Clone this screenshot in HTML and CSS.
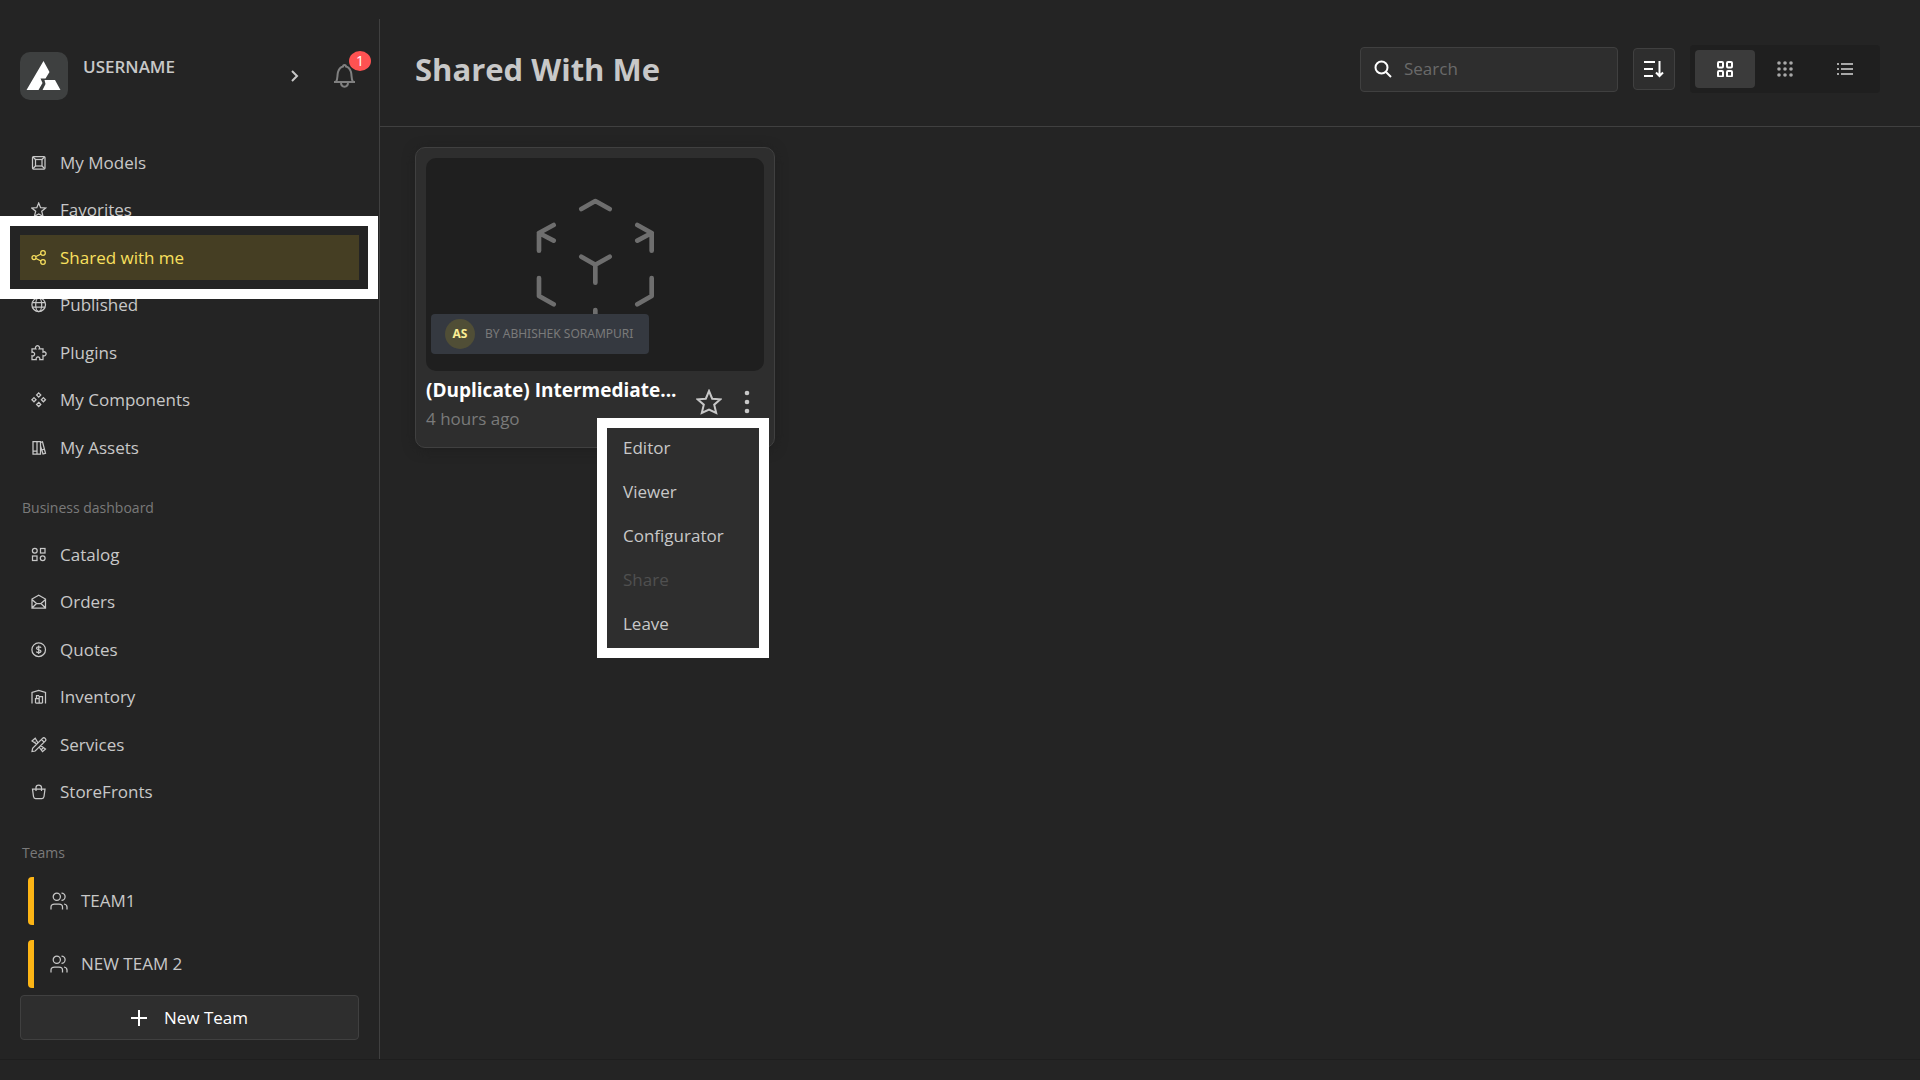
FILE: index.html
```html
<!DOCTYPE html>
<html lang="en">
<head>
<meta charset="utf-8">
<meta name="viewport" content="width=device-width, initial-scale=1">
<title>Shared With Me</title>
<link rel="stylesheet" href="styles.css">
</head>
<body>
<div class="app">
  <aside class="sidebar">
    <div class="profile">
      <svg class="avatar" viewBox="0 0 48 48" aria-hidden="true"><path fill="#fff" d="M23.500 9 29.500 20 25.500 26.500H20.500L22.500 31 18.500 38H6.500zM24.500 28H35L40.500 38H22.500L25.500 32z"/></svg>
      <span class="username">USERNAME</span>
      <button class="icon-btn chevron" aria-label="Account menu"><svg viewBox="0 0 10 14"><path d="M2 2l5 5-5 5"/></svg></button>
      <button class="icon-btn bell" aria-label="Notifications">
        <svg viewBox="0 0 24 26"><path d="M1 19h21M3 19c2-3 1-6 2-10 1-3 3-5 5-5.500a1.500 1.500 0 0 1 3 0c2 .5 4 2.500 5 5.500 1 4 0 7 2 10M8 19.500c0 5.500 7 5.500 7 0"/></svg>
        <span class="count">1</span>
      </button>
    </div>

    <nav>
      <ul class="nav-list models">
        <li><a href="#"><svg viewBox="0 0 16 16"><rect x="1.500" y="1.500" width="12.500" height="12.500" rx="1"/><rect x="4.500" y="4.500" width="6.500" height="6.500"/><path d="M2 2l2.500 2.500M13.500 2L11 4.500M2 13.500L4.500 11M13.500 13.500L11 11"/></svg>My Models</a></li>
        <li><a href="#"><svg viewBox="0 0 16 16"><path d="M7.700 1l1.900 4.700 5 .3-3.900 3.200 1.300 5-4.300-2.200-4.300 2.200 1.300-5L.8 6l5-.3z"/></svg>Favorites</a></li>
        <li class="active"><a href="#" aria-current="page"><svg viewBox="0 0 16 16"><circle cx="3" cy="7.500" r="2"/><circle cx="12" cy="3" r="2.300"/><circle cx="12" cy="12" r="2.300"/><path d="M5 6.500L10 4M5 8.500l5 2.500"/></svg>Shared with me</a></li>
        <li><a href="#"><svg viewBox="0 0 16 16"><circle cx="7.700" cy="7.700" r="6.800"/><ellipse cx="7.700" cy="7.700" rx="3" ry="6.800"/><path d="M1.500 5.500h12.500M1.500 10h12.500"/></svg>Published</a></li>
        <li><a href="#"><svg viewBox="0 0 16 16"><path d="M1 3.800h3.800a2 2 0 1 1 3.400 0H12v3.300a2 2 0 1 1 0 3.400V14.500H8.800a1.900 1.900 0 1 0-3.600 0H1v-3.700a1.900 1.900 0 1 0 0-3.500z"/></svg>Plugins</a></li>
        <li><a href="#"><svg viewBox="0 0 16 16"><path d="M7.700.9l2.100 2.100-2.100 2.100L5.600 3zM7.700 10.300l2.100 2.100-2.100 2.100-2.100-2.100zM3 5.600l2.100 2.100L3 9.800.9 7.700zM12.400 5.600l2.100 2.100-2.100 2.100-2.100-2.100z"/></svg>My Components</a></li>
        <li><a href="#"><svg viewBox="0 0 16 16"><path d="M2 1.500h4v12.500H2zM6 1.500h3.500v12.500H6zM9.500 2.500l2-.7 3 11.500-2.500.7-2.500-8M2 11h4M10.800 10l2.700-.8"/></svg>My Assets</a></li>
      </ul>
      <h2 class="section">Business dashboard</h2>
      <ul class="nav-list business">
        <li><a href="#"><svg viewBox="0 0 16 16"><circle cx="3.800" cy="3.800" r="2.400"/><rect x="9.500" y="1.500" width="4.500" height="4.500"/><rect x="1.500" y="9" width="4.500" height="4.500"/><circle cx="11.700" cy="11.300" r="2.400"/></svg>Catalog</a></li>
        <li><a href="#"><svg viewBox="0 0 16 16"><path d="M1 5l6.700-3.800L14.500 5v9H1zM1 5.500l4.500 4h4.500l4.500-4M1.500 13.500l4-4M14 13.500l-4-4"/></svg>Orders</a></li>
        <li><a href="#"><svg viewBox="0 0 16 16"><circle cx="7.700" cy="7.700" r="6.800"/><path d="M10 5.800C9.500 4.500 5.500 4.500 5.500 6.300c0 2 4.500.9 4.500 2.900 0 1.900-4.200 1.800-4.600.3M7.700 3.500v8.500"/></svg>Quotes</a></li>
        <li><a href="#"><svg viewBox="0 0 16 16"><path d="M1 14.500V3.500l6.700-2.200 6.800 2.200v11M4.500 14V9.500h3.700V14M8.200 14V7.500h3.300V14M4.500 14h7M5.500 9.500V6.500h2.700"/></svg>Inventory</a></li>
        <li><a href="#"><svg viewBox="0 0 16 16"><path d="M1 14.500l.6-3.200L11.500 1.400a1.900 1.900 0 0 1 2.700 2.700L4.200 14zM6.800 5.600L4.200 1.200 1 4l4.500 3M3 6l1.500-1.200M9.500 8.500L14.500 12l-3 2.700L8 10M10.500 12.500l2-2M10.500 2.500l2.600 2.600"/></svg>Services</a></li>
        <li><a href="#"><svg viewBox="0 0 16 16"><path d="M1.500 5h12.500L13 12.500q-.3 2-2 2H4.500q-1.700 0-2-2zM5 7V3.500q0-2.500 2.700-2.500t2.800 2.500V7"/></svg>StoreFronts</a></li>
      </ul>
      <h2 class="section">Teams</h2>
      <ul class="teams">
        <li><a href="#"><svg viewBox="0 0 18 18"><circle cx="6.800" cy="4.800" r="3.600"/><path d="M1 17.500v-2.500q0-3 3.500-3h4.500q3.500 0 3.500 3v2.500M11.500 1.200a3.600 3.600 0 0 1 0 7.200M14 12q3 .5 3 3v2.500"/></svg>TEAM1</a></li>
        <li><a href="#"><svg viewBox="0 0 18 18"><circle cx="6.800" cy="4.800" r="3.600"/><path d="M1 17.500v-2.500q0-3 3.500-3h4.500q3.500 0 3.500 3v2.500M11.500 1.200a3.600 3.600 0 0 1 0 7.200M14 12q3 .5 3 3v2.500"/></svg>NEW TEAM 2</a></li>
      </ul>
    </nav>
    <button class="new-team"><svg viewBox="0 0 16 16"><path d="M8 0v16M0 8h16"/></svg>New Team</button>
  </aside>

  <main class="main">
    <header class="topbar">
      <h1>Shared With Me</h1>
      <label class="search">
        <svg viewBox="0 0 18 18"><circle cx="7.500" cy="7.500" r="6"/><path d="M12 12l5 5"/></svg>
        <input type="search" placeholder="Search" aria-label="Search">
      </label>
      <button class="sort" aria-label="Sort"><svg viewBox="0 0 20 18"><path d="M0 2h11M0 9h9M0 16h9M15.500 1v15M12 12.500l3.500 3.500 3.500-3.500"/></svg></button>
      <div class="views" role="group" aria-label="View">
        <button class="selected" aria-label="Large grid"><svg viewBox="0 0 16 16"><rect x="1" y="1" width="5" height="5.500" rx="1"/><rect x="10" y="1" width="5" height="5.500" rx="1"/><rect x="1" y="10" width="5" height="5.500" rx="1"/><rect x="10" y="10" width="5" height="5.500" rx="1"/></svg></button>
        <button aria-label="Small grid"><svg class="dots" viewBox="0 0 16 16"><circle cx="2" cy="2" r="1.800"/><circle cx="8" cy="2" r="1.800"/><circle cx="14" cy="2" r="1.800"/><circle cx="2" cy="8" r="1.800"/><circle cx="8" cy="8" r="1.800"/><circle cx="14" cy="8" r="1.800"/><circle cx="2" cy="14" r="1.800"/><circle cx="8" cy="14" r="1.800"/><circle cx="14" cy="14" r="1.800"/></svg></button>
        <button aria-label="List"><svg viewBox="0 0 16 16"><path d="M0 3h2M4 3h12M0 8h2M4 8h12M0 13h2M4 13h12"/></svg></button>
      </div>
    </header>

    <section class="grid">
      <article class="card">
        <div class="thumb">
          <svg viewBox="0 0 1014 639" aria-hidden="true"><path d="M466 153l42-24 43 24M383 201l-44 24 44 23M339 225v53M634 201l43 24-43 23M677 225v53M466 296l42 24 43-24M508 320v54M339 360v54l44 25M677 360v54l-43 25M508 456v54M466 486l42 24 43-24"/></svg>
          <div class="author"><span class="initials">AS</span>BY ABHISHEK SORAMPURI</div>
        </div>
        <div class="details">
          <div class="text">
            <h3>(Duplicate) Intermediate...</h3>
            <p>4 hours ago</p>
          </div>
          <button class="icon-btn star" aria-label="Add to favorites"><svg viewBox="0 0 26 26"><path d="M13 2l3.200 7.700 8.300.6-6.300 5.400 2 8.300L13 20.500 5.800 24l2-8.300L1.500 10.300l8.300-.6z"/></svg></button>
          <div class="more">
            <button class="icon-btn" aria-label="More" aria-expanded="true"><svg viewBox="0 0 6 24"><circle cx="3" cy="3" r="2.300"/><circle cx="3" cy="12" r="2.300"/><circle cx="3" cy="21" r="2.300"/></svg></button>
            <div class="menu" role="menu">
              <button role="menuitem">Editor</button>
              <button role="menuitem">Viewer</button>
              <button role="menuitem">Configurator</button>
              <button role="menuitem" disabled>Share</button>
              <button role="menuitem">Leave</button>
            </div>
          </div>
        </div>
      </article>
    </section>
  </main>
</div>
</body>
</html>
```
FILE: styles.css
```css
* {
  box-sizing: border-box;
}

body {
  margin: 0;
  min-height: 100vh;
  padding: 19px 0 20px;
  display: flex;
  background: #242424;
  color: #c8c8c8;
  font: 17px/24px "Open Sans", "Noto Sans", sans-serif;
}

h1, h2, h3, p, ul {
  margin: 0;
  padding: 0;
}

ul {
  list-style: none;
}

a {
  color: inherit;
  text-decoration: none;
}

button, input {
  font: inherit;
  color: inherit;
  padding: 0;
  border: 0;
  background: none;
}

svg {
  display: block;
  flex: none;
  fill: none;
  stroke: currentColor;
}

.app {
  flex: 1;
  display: flex;
  border-bottom: 1px solid #1e1e1e;
}

/* Sidebar */
.sidebar {
  flex: none;
  width: 380px;
  padding: 33px 20px 18px;
  border-right: 1px solid #404040;
}

.profile {
  display: flex;
  margin-bottom: 40px;
}

.avatar {
  width: 48px;
  height: 48px;
  border-radius: 10px;
  background: #3e4040;
  stroke: none;
}

.username {
  flex: 1;
  margin: 3px 0 0 15px;
  font-weight: 600;
}

.icon-btn {
  display: grid;
  place-items: center;
}

.chevron svg {
  width: 10px;
  height: 14px;
  stroke-width: 2;
}

.bell {
  position: relative;
  margin: 0 2px 0 33px;
  color: #808080;
}

.bell svg {
  width: 24px;
  height: 26px;
  stroke-width: 2;
}

.count {
  position: absolute;
  top: -1px;
  right: -14px;
  width: 22px;
  height: 20px;
  border-radius: 50%;
  background: #ff5252;
  color: #fff;
  font-size: 14px;
  line-height: 20px;
}

.nav-list {
  display: flex;
  flex-direction: column;
  justify-content: space-between;
}

.models {
  min-height: 330px;
}

.business {
  min-height: 283px;
}

.nav-list a {
  display: flex;
  align-items: center;
  gap: 13px;
  height: 45px;
  padding-left: 11px;
}

.nav-list svg {
  width: 16px;
  height: 16px;
  stroke-width: 1.25;
}

.active {
  position: relative;
  background: #453e23;
  color: #f9e05e;
}

/* White callout frame round the current item */
.active::after {
  content: "";
  position: absolute;
  inset: -19px -19px -19px -20px;
  border: 10px solid #fff;
  pointer-events: none;
}

.section {
  padding: 26px 2px 12px;
  color: #7a7a7a;
  font-size: 14px;
  font-weight: 400;
}

.teams {
  display: grid;
  gap: 15px;
}

.teams a {
  display: flex;
  align-items: center;
  gap: 13px;
  height: 48px;
  margin-left: 8px;
  padding-left: 16px;
  border-left: 6px solid #fdb515;
  border-radius: 4px 0 0 4px;
}

.teams svg {
  width: 18px;
  height: 18px;
  stroke-width: 1.25;
}

.new-team {
  display: flex;
  align-items: center;
  justify-content: center;
  gap: 17px;
  width: 100%;
  height: 45px;
  margin-top: 7px;
  border: 1px solid #404040;
  border-radius: 4px;
  background: #2e2e2e;
  color: #fff;
}

.new-team svg {
  width: 16px;
  height: 16px;
  stroke-width: 2;
}

/* Main area */
.main {
  flex: 1;
  min-width: 0;
}

.topbar {
  display: flex;
  align-items: center;
  gap: 15px;
  height: 108px;
  padding: 0 40px 7px 35px;
  border-bottom: 1px solid #404040;
}

h1 {
  flex: 1;
  font-size: 31px;
  line-height: 44px;
  font-weight: 700;
}

.search {
  display: flex;
  align-items: center;
  gap: 12px;
  width: 258px;
  height: 45px;
  padding: 0 13px;
  border: 1px solid #404040;
  border-radius: 4px;
  background: #2e2e2e;
}

.search svg {
  width: 18px;
  height: 18px;
  color: #fff;
  stroke-width: 2;
}

.search input {
  min-width: 0;
  flex: 1;
  outline: 0;
  appearance: none;
}

.search input::placeholder {
  color: #6a6a6a;
}

.sort {
  display: grid;
  place-items: center;
  width: 42px;
  height: 42px;
  border: 1px solid #404040;
  border-radius: 4px;
  background: #2e2e2e;
  color: #fff;
}

.sort svg {
  width: 20px;
  height: 18px;
  stroke-width: 2;
}

.views {
  display: flex;
  padding: 5px;
  border-radius: 4px;
  background: #1f1f1f;
  color: #a8a8a8;
}

.views button {
  display: grid;
  place-items: center;
  width: 60px;
  height: 38px;
  border-radius: 4px;
}

.views .selected {
  background: #3b3b3b;
  color: #fff;
}

.views svg {
  width: 16px;
  height: 16px;
  stroke-width: 2;
}

.views .dots,
.more svg {
  fill: currentColor;
  stroke: none;
}

.grid {
  display: grid;
  grid-template-columns: repeat(auto-fill, 360px);
  gap: 20px;
  padding: 20px 35px;
}

.card {
  padding: 10px;
  border: 1px solid #404040;
  border-radius: 10px;
  background: #2e2e2e;
  box-shadow: 0 2px 12px #1f1f1f;
}

.thumb {
  position: relative;
  border-radius: 10px;
  background: #1f1f1f;
}

.thumb > svg {
  width: 100%;
  color: #6e6e6e;
  stroke-width: 14;
  stroke-linecap: round;
  stroke-linejoin: round;
}

.author {
  position: absolute;
  left: 5px;
  bottom: 17px;
  display: flex;
  align-items: center;
  gap: 10px;
  height: 40px;
  padding: 0 16px 0 14px;
  border-radius: 4px;
  background: #353940;
  color: #7a7a7a;
  font-family: "Noto Sans", "Open Sans", sans-serif;
  font-size: 12px;
  white-space: nowrap;
}

.initials {
  width: 30px;
  height: 30px;
  border-radius: 50%;
  background: #504e36;
  color: #fbee94;
  font-weight: 700;
  line-height: 30px;
  text-align: center;
}

.details {
  display: flex;
  padding: 5px 14px 3px 0;
}

.text {
  flex: 1;
  min-width: 0;
}

h3 {
  color: #fff;
  font-size: 19px;
  line-height: 28px;
  font-weight: 700;
  white-space: nowrap;
}

.text p {
  line-height: 30px;
  color: #7a7a7a;
}

.details .icon-btn {
  height: 52px;
}

.star svg {
  width: 26px;
  height: 26px;
  stroke-width: 2;
}

.more {
  position: relative;
  margin-left: 22px;
}

.more svg {
  width: 6px;
  height: 24px;
}

.menu {
  position: absolute;
  z-index: 1;
  top: 42px;
  right: -19px;
  width: 172px;
  border: 10px solid #fff;
  background: #2e2e2e;
}

.menu button {
  display: block;
  width: 100%;
  padding: 0 16px 4px;
  line-height: 40px;
  text-align: left;
}

.menu button:disabled {
  color: #505050;
}
```
